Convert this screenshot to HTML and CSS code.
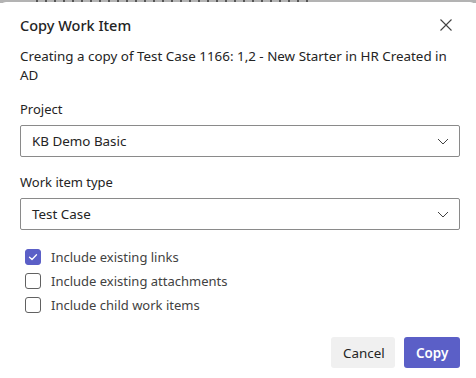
FILE: index.html
```html
<!DOCTYPE html>
<html lang="en">
<head>
    <meta charset="UTF-8">
    <title>Copy Work Item</title>
    <link rel="stylesheet" href="styles.css">
</head>
<body>
    <div class="backdrop"></div>

    <div class="dialog">
        <div class="dialog-header">
            <h2>Copy Work Item</h2>
            <button class="close" aria-label="Close">
                <svg width="12" height="12" viewBox="0 0 12 12">
                    <path d="M0.5 0.5 L11.5 11.5 M11.5 0.5 L0.5 11.5" stroke="#424242" stroke-width="1.1" fill="none"/>
                </svg>
            </button>
        </div>

        <p class="desc">Creating a copy of Test Case 1166: 1,2 - New Starter in HR Created in AD</p>

        <div class="field">
            <label>Project</label>
            <div class="select">
                <span>KB Demo Basic</span>
                <svg width="12" height="12" viewBox="0 0 12 12">
                    <path d="M1 4 L6 9 L11 4" stroke="#424242" stroke-width="1" fill="none"/>
                </svg>
            </div>
        </div>

        <div class="field">
            <label>Work item type</label>
            <div class="select">
                <span>Test Case</span>
                <svg width="12" height="12" viewBox="0 0 12 12">
                    <path d="M1 4 L6 9 L11 4" stroke="#424242" stroke-width="1" fill="none"/>
                </svg>
            </div>
        </div>

        <div class="checks">
            <div class="check">
                <span class="box checked">
                    <svg width="10" height="10" viewBox="0 0 10 10">
                        <path d="M1.5 5.2 L4 7.5 L8.5 2.8" stroke="#fff" stroke-width="1.3" fill="none" stroke-linecap="round" stroke-linejoin="round"/>
                    </svg>
                </span>
                <span>Include existing links</span>
            </div>
            <div class="check">
                <span class="box"></span>
                <span>Include existing attachments</span>
            </div>
            <div class="check">
                <span class="box"></span>
                <span>Include child work items</span>
            </div>
        </div>

        <div class="actions">
            <button class="btn">Cancel</button>
            <button class="btn primary">Copy</button>
        </div>
    </div>
</body>
</html>
```

FILE: styles.css
```css
* {
    margin: 0;
    padding: 0;
    box-sizing: border-box;
}

body {
    font-family: 'Noto Sans', 'Open Sans', sans-serif;
    color: #242424;
    background: #fff;
    width: 476px;
    height: 378px;
    overflow: hidden;
}

/* page behind the dialog, only a sliver shows */
.backdrop {
    height: 3px;
    background:
        repeating-linear-gradient(90deg, transparent 0 3px, #555 3px 5px, transparent 5px 9px) 33px 0 / 282px 2px no-repeat,
        #b3b3b3;
}

.dialog {
    background: #fff;
    border-radius: 6px 6px 0 0;
    margin-top: -1px;
    padding: 11px 16px 0 20px;
}

.dialog-header {
    display: flex;
    justify-content: space-between;
    align-items: center;
    height: 24px;
}

.dialog-header h2 {
    font-size: 14.5px;
    font-weight: 500;
}

.close {
    border: none;
    background: none;
    width: 24px;
    height: 24px;
    display: flex;
    align-items: center;
    justify-content: center;
    margin-right: 2px;
}

.desc {
    margin-top: 10px;
    font-size: 13.4px;
    line-height: 19px;
    padding-right: 8px;
}

.field {
    margin-top: 15px;
}

.field + .field {
    margin-top: 16px;
}

.field label {
    display: block;
    font-size: 13px;
    line-height: 19px;
    margin-bottom: 6px;
}

.select {
    display: flex;
    justify-content: space-between;
    align-items: center;
    width: 440px;
    height: 32px;
    border: 1px solid #8a8a8a;
    border-radius: 2px;
    padding: 0 10px 0 11px;
    font-size: 13.4px;
}

.checks {
    margin-top: 18px;
    display: flex;
    flex-direction: column;
    gap: 6px;
    padding-left: 5px;
}

.check {
    display: flex;
    align-items: center;
    gap: 10px;
    height: 18px;
    font-size: 13px;
    color: #424242;
}

.box {
    width: 16px;
    height: 16px;
    border: 1px solid #616161;
    border-radius: 3px;
    display: flex;
    align-items: center;
    justify-content: center;
}

.box.checked {
    background: #5b5fc7;
    border-color: #5b5fc7;
}

.actions {
    margin-top: 23px;
    display: flex;
    justify-content: flex-end;
    gap: 9px;
}

.btn {
    font-family: inherit;
    font-size: 13.4px;
    height: 31px;
    padding: 0 12px;
    border: none;
    border-radius: 3px;
    background: #f0f0f0;
    color: #242424;
    width: 64px;
}

.btn.primary {
    background: #5b5fc7;
    color: #fff;
    font-weight: 600;
    width: 56px;
}
```
